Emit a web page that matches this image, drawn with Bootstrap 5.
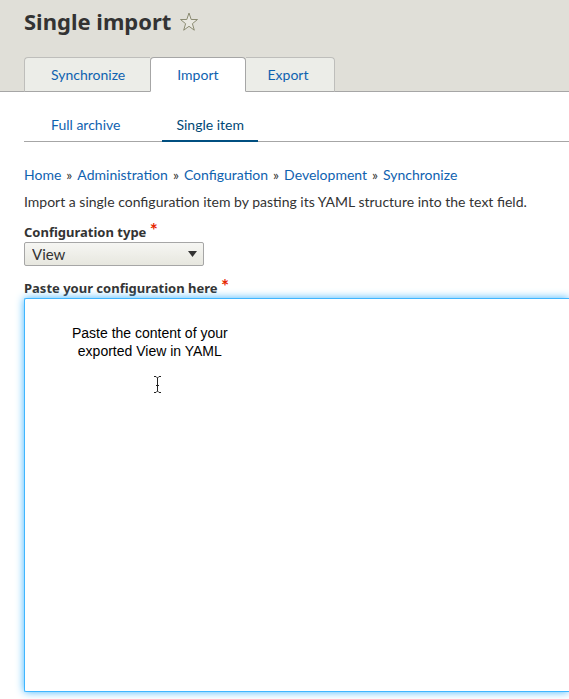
<!DOCTYPE html>
<html lang="en">
<head>
<meta charset="utf-8">
<meta name="viewport" content="width=device-width, initial-scale=1">
<title>Single import</title>
<link href="https://cdn.jsdelivr.net/npm/bootstrap@5.3.0/dist/css/bootstrap.min.css" rel="stylesheet">
<style>
body { font-family: Lato, "Noto Sans", sans-serif; font-size: 14px; line-height: 20px; color: #333; background: #fff; }
a { color: #0f62b0; text-decoration: none; }
.page-head { background: #e0dfd8; padding: 8px 0 0 24px; border-bottom: 1px solid #a6a6a6; }
.page-title { font-family: "Noto Sans", sans-serif; font-size: 22px; line-height: 27px; font-weight: 700; }
.star-btn { width: 20px; height: 20px; line-height: 0; }
.primary-tabs { --bs-nav-tabs-border-width: 0; margin-top: 22px; margin-bottom: -1px; }
.primary-tabs .nav-link { padding: 7px 26px 6px; line-height: 20px; color: #0f62b0; background: #ecede8; border: 1px solid #bebebb; border-bottom-color: #a6a6a6; border-radius: 0; margin: 0; }
.primary-tabs .nav-item:first-child .nav-link { padding-right: 25px; border-top-left-radius: 4px; border-right: 0; }
.primary-tabs .nav-item:last-child .nav-link { padding-left: 22px; border-top-right-radius: 4px; border-left: 0; }
.primary-tabs .nav-link.active { color: #0f62b0; background: #fff; border-color: #a6a6a6 #a6a6a6 #fff; border-radius: 4px 4px 0 0; }
.page-main { padding-left: 24px; }
.secondary-tabs { margin-top: 23px; gap: 28px; padding-left: 13px; border-bottom: 1px solid #a6a6a6; }
.secondary-tabs .nav-link { padding: 0 14px 5px; line-height: 20px; color: #0f62b0; border-bottom: 2px solid transparent; margin-bottom: -1px; }
.secondary-tabs .nav-link.active { color: #004875; border-color: #004f80; }
.crumbs { --bs-breadcrumb-divider: "»"; --bs-breadcrumb-item-padding-x: 5px; --bs-breadcrumb-divider-color: #333; --bs-breadcrumb-font-size: 14px; margin: 23px 0 7px; }
.field-label { font-family: "Noto Sans", sans-serif; font-size: 13px; font-weight: 700; line-height: 20px; margin: 0; }
.required-mark { font-family: Lato, sans-serif; color: #e62600; font-size: 19px; line-height: 10px; }
.type-select { width: 180px; height: 24px; padding: 0 24px 0 7px; font-size: 15px; line-height: 20px; color: #333; border: 1px solid #a6a6a6; border-radius: 2px; background: url("data:image/svg+xml,%3Csvg xmlns='http://www.w3.org/2000/svg' viewBox='0 0 9 6'%3E%3Cpath d='M0 0h9L4.500 6z' fill='%23333'/%3E%3C/svg%3E") right 6px center / 9px 6px no-repeat, linear-gradient(#f6f6f3, #e7e7df); }
.config-form { margin-top: 10px; }
.editor { margin-bottom: 7px; }
.editor textarea, .editor textarea:focus { resize: none; border: 1px solid #40b6ff; border-right: 0; border-radius: 2px 0 0 2px; box-shadow: 0 0 8px #40b6ff; background: #fff; min-height: 160px; }
.hint { position: absolute; top: 26px; left: 48px; font-family: "Liberation Sans", sans-serif; font-size: 14px; line-height: 18px; color: #000; pointer-events: none; }
.text-pointer { display: block; margin: 16px 66px 0 auto; }
</style>
<script src="https://cdn.jsdelivr.net/npm/bootstrap@5.3.0/dist/js/bootstrap.bundle.min.js"></script>
</head>
<body class="d-flex flex-column min-vh-100 overflow-x-hidden">
<header class="page-head">
  <div class="d-flex align-items-center gap-2">
    <h1 class="page-title mb-0">Single import</h1>
    <button type="button" class="star-btn btn p-0 border-0" aria-label="Add to shortcuts">
      <svg width="20" height="20" viewBox="0 0 20 20" fill="#e9e8e1" stroke="#8b8b72" stroke-width="1" stroke-linejoin="round"><path d="M10 1l2.200 6.500h6.300l-5.100 4.200 1.900 6.500-5.300-3.900-5.300 3.900 1.900-6.500-5.100-4.200h6.300z"/></svg>
    </button>
  </div>
  <ul class="nav nav-tabs primary-tabs">
    <li class="nav-item"><a class="nav-link" href="#">Synchronize</a></li>
    <li class="nav-item"><a class="nav-link active" aria-current="page" href="#">Import</a></li>
    <li class="nav-item"><a class="nav-link" href="#">Export</a></li>
  </ul>
</header>
<main class="page-main d-flex flex-column flex-grow-1">
  <ul class="nav secondary-tabs">
    <li class="nav-item"><a class="nav-link" href="#">Full archive</a></li>
    <li class="nav-item"><a class="nav-link active" aria-current="page" href="#">Single item</a></li>
  </ul>
  <nav aria-label="Breadcrumb">
    <ol class="breadcrumb crumbs">
      <li class="breadcrumb-item"><a href="#">Home</a></li>
      <li class="breadcrumb-item"><a href="#">Administration</a></li>
      <li class="breadcrumb-item"><a href="#">Configuration</a></li>
      <li class="breadcrumb-item"><a href="#">Development</a></li>
      <li class="breadcrumb-item"><a href="#">Synchronize</a></li>
    </ol>
  </nav>
  <p class="mb-0">Import a single configuration item by pasting its YAML structure into the text field.</p>
  <form class="config-form d-flex flex-column flex-grow-1">
    <div class="mb-2">
      <label class="field-label d-block" for="config-type">Configuration type <span class="required-mark">*</span></label>
      <select class="form-select type-select" id="config-type"><option>View</option></select>
    </div>
    <label class="field-label mt-1" for="config-text">Paste your configuration here <span class="required-mark">*</span></label>
    <div class="editor position-relative d-flex flex-grow-1">
      <textarea class="form-control" id="config-text" aria-describedby="config-hint"></textarea>
      <div class="hint text-center" id="config-hint">Paste the content of your<br>exported View in YAML
        <svg class="text-pointer" width="9" height="17" viewBox="0 0 9 17" fill="none" stroke="#222" stroke-width="1" aria-hidden="true"><path d="M1 .5h2l1.500 1.500L6 .5h2M1 16.500h2L4.500 15 6 16.500h2M4.500 2v13M3 9.500h3"/></svg>
      </div>
    </div>
  </form>
</main>
</body>
</html>
